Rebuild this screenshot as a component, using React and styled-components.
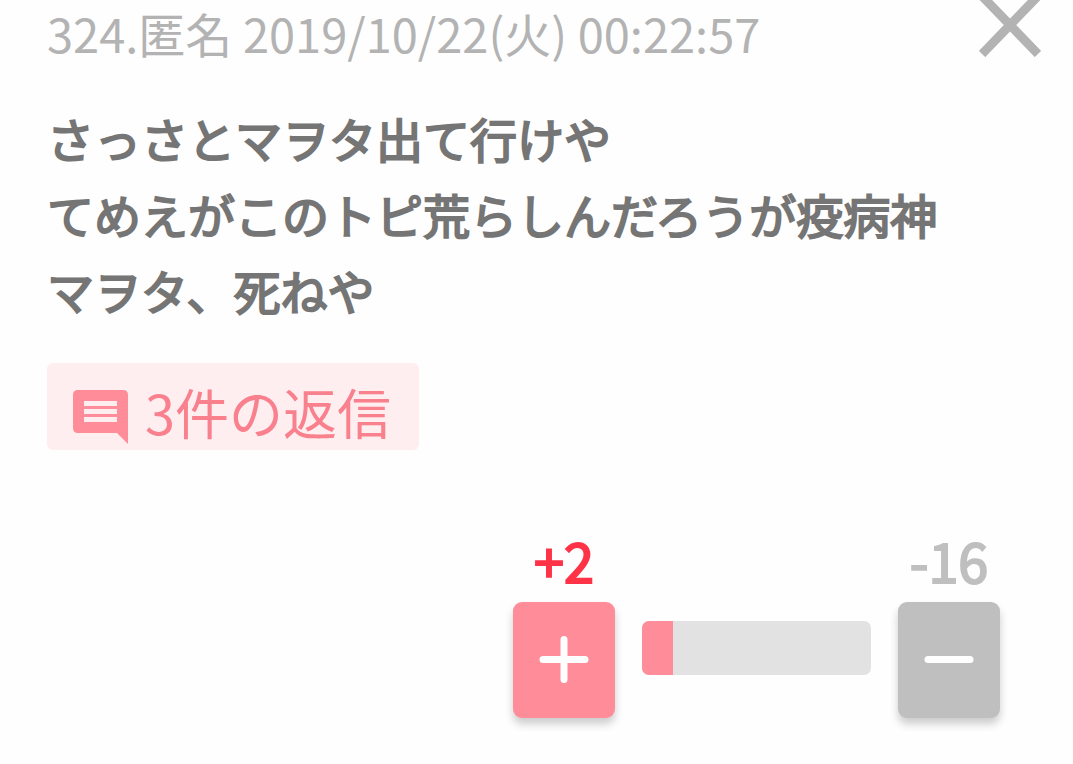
import styled, { createGlobalStyle } from "styled-components";

const GlobalStyle = createGlobalStyle`
  * {
    box-sizing: border-box;
  }
  body {
    margin: 0;
    background-color: #fefefe;
    font-family: "Noto Sans CJK JP", sans-serif;
  }
`;

const comment = {
  number: 324,
  name: "匿名",
  date: "2019/10/22(火) 00:22:57",
  lines: [
    "さっさとマヲタ出て行けや",
    "てめえがこのトピ荒らしんだろうが疫病神",
    "マヲタ、死ねや",
  ],
  replies: 3,
  plus: 2,
  minus: 16,
  share: 13.5,
};

const App = () => {
  const { number, name, date, lines, replies, plus, minus, share } = comment;

  return (
    <>
      <GlobalStyle />
      <Comment>
        <Header>
          <Meta>
            {number}.{name} {date}
          </Meta>
          <CloseButton aria-label="閉じる">
            <svg width="62" height="57" viewBox="0 0 62 57" aria-hidden="true">
              <path d="M3 -4L59 54M59 -4L3 54" stroke="#b3b3b3" strokeWidth="9" />
            </svg>
          </CloseButton>
        </Header>
        <Body>
          {lines.map((line) => (
            <Line key={line}>{line}</Line>
          ))}
        </Body>
        <ReplyLink href="#replies">
          <ReplyIcon />
          {replies}件の返信
        </ReplyLink>
        <Votes>
          <Vote>
            <Count $color="#ff3347">+{plus}</Count>
            <VoteButton $color="#ff8c99" aria-label="プラス">
              <svg width="50" height="50" viewBox="0 0 50 50" aria-hidden="true">
                <path d="M4 24.5H46M25 4.5V44.5" stroke="#fefefe" strokeWidth="7" strokeLinecap="round" />
              </svg>
            </VoteButton>
          </Vote>
          <Bar>
            <BarFill style={{ width: `${share}%` }} />
          </Bar>
          <Vote>
            <Count $color="#bfbfbf">-{minus}</Count>
            <VoteButton $color="#bfbfbf" aria-label="マイナス">
              <svg width="50" height="50" viewBox="0 0 50 50" aria-hidden="true">
                <path d="M4 24.5H46" stroke="#fefefe" strokeWidth="7" strokeLinecap="round" />
              </svg>
            </VoteButton>
          </Vote>
        </Votes>
      </Comment>
    </>
  );
};

const ReplyIcon = () => (
  <svg width="55" height="54" viewBox="0 0 55 54" aria-hidden="true">
    <path
      fill="#ff8c99"
      fillRule="evenodd"
      d="M5 0H50Q55 0 55 5V54L44 43H5Q0 43 0 38V5Q0 0 5 0ZM11 11V16H44V11ZM11 19V24H44V19ZM11 27V32H44V27Z"
    />
  </svg>
);

const Comment = styled.article`
  padding-bottom: 46px;
`;

const Header = styled.header`
  display: flex;
  justify-content: space-between;
  align-items: flex-start;
  padding: 0 32px 0 47px;
`;

const Meta = styled.div`
  color: #b3b3b3;
  font-size: 47px;
  line-height: 66px;
`;

const CloseButton = styled.button`
  display: flex;
  padding: 0;
  border: 0;
  background: none;
  cursor: pointer;
`;

const Body = styled.div`
  padding: 34px 47px 35px;
  color: #757575;
  font-size: 47px;
  line-height: 76px;
  -webkit-text-stroke: 2px currentColor;
`;

const Line = styled.p`
  margin: 0;
`;

const ReplyLink = styled.a`
  display: inline-flex;
  align-items: center;
  gap: 17px;
  margin-left: 47px;
  padding: 10px 28px 0 26px;
  border-radius: 6px;
  background-color: #ffeef0;
  color: #f9808d;
  font-size: 54px;
  line-height: 77px;
  text-decoration: none;

  svg {
    margin-top: 10px;
  }
`;

const Votes = styled.div`
  display: flex;
  justify-content: flex-end;
  align-items: flex-end;
  gap: 27px;
  margin-top: 68px;
  padding-right: 73px;
`;

const Vote = styled.div`
  display: flex;
  flex-direction: column;
  align-items: center;
`;

const Count = styled.span`
  color: ${(props) => props.$color};
  font-size: 54px;
  line-height: 84px;
  -webkit-text-stroke: 2px currentColor;
`;

const VoteButton = styled.button`
  display: flex;
  align-items: center;
  justify-content: center;
  width: 102px;
  height: 116px;
  padding: 0;
  border: 0;
  border-radius: 9px;
  background-color: ${(props) => props.$color};
  box-shadow: 0 6px 8px rgba(0, 0, 0, 0.2);
  cursor: pointer;
`;

const Bar = styled.div`
  width: 229px;
  height: 54px;
  margin-bottom: 43px;
  border-radius: 7px;
  background-color: #e2e2e2;
  overflow: hidden;
`;

const BarFill = styled.div`
  height: 100%;
  background-color: #ff8c99;
`;

export default App;
